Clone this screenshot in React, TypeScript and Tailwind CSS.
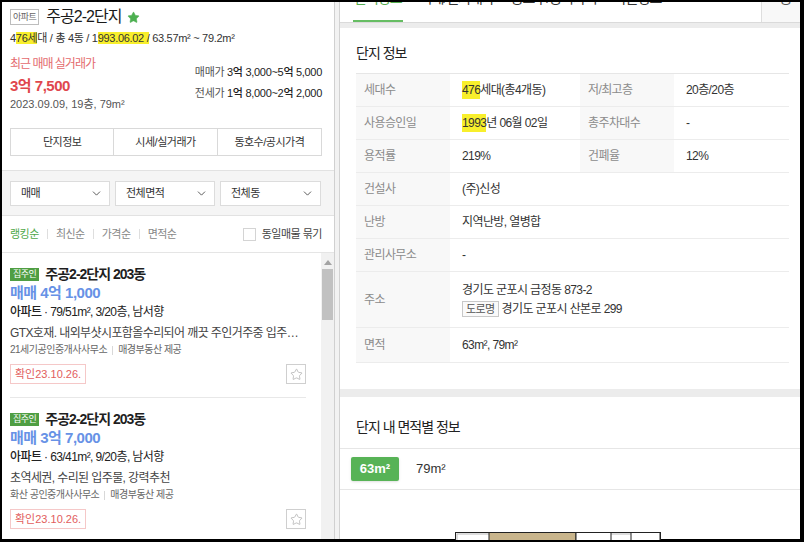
import type { ReactNode } from 'react';
import { ChevronDown, Star } from 'lucide-react';

const HL = ({ children }: { children: ReactNode }) => <span className="bg-[#f8ef2c]">{children}</span>;

const infoRows: { k: string; v: ReactNode; k2?: string; v2?: string }[] = [
  { k: '세대수', v: <><HL>476</HL>세대(총4개동)</>, k2: '저/최고층', v2: '20층/20층' },
  { k: '사용승인일', v: <><HL>1993</HL>년 06월 02일</>, k2: '총주차대수', v2: '-' },
  { k: '용적률', v: '219%', k2: '건폐율', v2: '12%' },
  { k: '건설사', v: '(주)신성' },
  { k: '난방', v: '지역난방, 열병합' },
  { k: '관리사무소', v: '-' },
];

const listings = [
  {
    title: '주공2-2단지 203동',
    price: '매매 4억 1,000',
    spec: '79/51m², 3/20층, 남서향',
    desc: 'GTX호재. 내외부샷시포함올수리되어 깨끗 주인거주중 입주협의 가능합니다',
    agent: '21세기공인중개사사무소',
    date: '23.10.26.',
  },
  {
    title: '주공2-2단지 203동',
    price: '매매 3억 7,000',
    spec: '63/41m², 9/20층, 남서향',
    desc: '초역세권, 수리된 입주물, 강력추천',
    agent: '화산 공인중개사사무소',
    date: '23.10.26.',
  },
];

function Select({ label, w }: { label: string; w: string }) {
  return (
    <div className={`${w} h-[25px] bg-white border border-[#dcdcdc] flex items-center justify-between pl-[10px] pr-[6px] text-[11px] text-[#333] tracking-[-0.5px]`}>
      <span>{label}</span>
      <ChevronDown className="w-[13px] h-[13px] text-[#444]" strokeWidth={1.6} />
    </div>
  );
}

function ListingCard({ item }: { item: (typeof listings)[number] }) {
  return (
    <div className="pt-[13px] pb-[13px] border-b border-[#e8e8e8]">
      <div className="flex items-center h-[16px]">
        <span className="h-[13px] px-[3px] bg-[#4f9e43] text-white text-[9px] leading-[13px] tracking-[-0.5px]">집주인</span>
        <span className="ml-[6px] text-[14px] leading-[16px] font-semibold text-[#1f1f1f] tracking-[-1px]">{item.title}</span>
      </div>
      <div className="mt-[1px] h-[20px] leading-[20px] text-[15px] font-bold text-[#6792e6] tracking-[-0.5px]">{item.price}</div>
      <div className="mt-[1px] h-[16px] leading-[16px] text-[12px] text-[#222] tracking-[-0.6px]">
        <span className="font-medium">아파트</span> · {item.spec}
      </div>
      <div className="mt-[5px] h-[16px] leading-[16px] text-[12px] text-[#444] tracking-[-0.6px] truncate">{item.desc}</div>
      <div className="mt-[2px] h-[14px] leading-[14px] text-[10px] text-[#666] tracking-[-0.5px] flex items-center">
        <span>{item.agent}</span>
        <span className="mx-[5px] w-px h-[9px] bg-[#d8d8d8]" />
        <span>매경부동산 제공</span>
      </div>
      <div className="mt-[7px] flex items-center justify-between h-[20px]">
        <span className="h-[20px] px-[4px] border border-[#f5c8c8] text-[11px] leading-[18px] text-[#e25d5d]">
          확인{item.date}
        </span>
        <span className="w-[20px] h-[20px] border border-[#cfcfcf] flex items-center justify-center">
          <Star className="w-[13px] h-[13px] text-[#aaa]" strokeWidth={1.3} />
        </span>
      </div>
    </div>
  );
}

export default function App() {
  return (
    <div className="w-[804px] h-[542px] bg-black pt-[2px] pl-[2px] pr-[4px] pb-[3px] overflow-hidden font-['Liberation_Sans','Noto_Sans_CJK_KR',sans-serif]">
      <div className="flex h-full bg-white">
        {/* left panel */}
        <div className="w-[333px] shrink-0 h-full flex flex-col border-r border-[#d0d0d0]">
          <div className="pl-[8px] pr-[12px]">
            <div className="flex items-center h-[18px] mt-[6px]">
              <span className="h-[16px] px-[2px] border border-[#bdbdbd] text-[9px] leading-[14px] text-[#666] tracking-[-0.5px]">아파트</span>
              <span className="ml-[7px] text-[16px] leading-[18px] text-[#1a1a1a] tracking-[-1px]">주공2-2단지</span>
              <Star className="ml-[6px] w-[13px] h-[13px] text-[#4caf50] fill-[#4caf50]" strokeWidth={1} />
            </div>
            <div className="mt-[5px] h-[14px] leading-[14px] text-[11px] text-[#333] tracking-[-0.3px]">
              4<HL>76세</HL>대 / 총 4동 / 1<HL>993.06.02 /</HL> 63.57m² ~ 79.2m²
            </div>
            <div className="flex justify-between">
              <div>
                <div className="mt-[12px] h-[14px] leading-[14px] text-[12px] text-[#e46a6e] tracking-[-1px]">최근 매매 실거래가</div>
                <div className="mt-[5px] h-[20px] leading-[20px] text-[15px] font-bold text-[#e0474d] tracking-[-0.5px]">3억 7,500</div>
                <div className="mt-[1px] h-[14px] leading-[14px] text-[11px] text-[#555]">2023.09.09, 19층, 79m²</div>
              </div>
              <div className="pt-[20px] flex flex-col gap-[7px] text-[11px] tracking-[-0.3px]">
                <div className="h-[14px] leading-[14px]">
                  <span className="text-[#555]">매매가 </span>
                  <span className="text-[#222] font-medium">3억 3,000~5억 5,000</span>
                </div>
                <div className="h-[14px] leading-[14px]">
                  <span className="text-[#555]">전세가 </span>
                  <span className="text-[#222] font-medium">1억 8,000~2억 2,000</span>
                </div>
              </div>
            </div>
            <div className="mt-[17px] h-[28px] grid grid-cols-3 border border-[#d9d9d9] text-[11px] text-[#333] tracking-[-0.5px]">
              <div className="flex items-center justify-center border-r border-[#d9d9d9]">단지정보</div>
              <div className="flex items-center justify-center border-r border-[#d9d9d9]">시세/실거래가</div>
              <div className="flex items-center justify-center">동호수/공시가격</div>
            </div>
          </div>

          <div className="mt-[14px] bg-[#f5f5f5] border-y border-[#e2e2e2] pt-[10px] pb-[9px] pl-[8px] pr-[12px] flex gap-[5px]">
            <Select label="매매" w="w-[100px]" />
            <Select label="전체면적" w="w-[100px]" />
            <Select label="전체동" w="w-[101px]" />
          </div>

          <div className="h-[37px] shrink-0 border-b border-[#e5e5e5] pl-[8px] pr-[12px] flex items-center text-[11px] tracking-[-0.5px]">
            <span className="text-[#4fa84a]">랭킹순</span>
            <span className="mx-[8px] w-px h-[10px] bg-[#dedede]" />
            <span className="text-[#888]">최신순</span>
            <span className="mx-[8px] w-px h-[10px] bg-[#dedede]" />
            <span className="text-[#888]">가격순</span>
            <span className="mx-[8px] w-px h-[10px] bg-[#dedede]" />
            <span className="text-[#888]">면적순</span>
            <span className="ml-auto w-[13px] h-[13px] border border-[#d4d4d4] bg-white" />
            <span className="ml-[6px] text-[#444]">동일매물 묶기</span>
          </div>

          <div className="flex-1 min-h-0 flex overflow-hidden">
            <div className="flex-1 min-w-0 pl-[8px] pr-[15px]">
              {listings.map((l, i) => (
                <ListingCard key={i} item={l} />
              ))}
            </div>
            <div className="w-[13px] shrink-0 bg-[#f1f1f1] flex flex-col items-center pt-[7px]">
              <svg width="8" height="5" viewBox="0 0 8 5">
                <path d="M0 5 L4 0 L8 5 Z" fill="#a3a3a3" />
              </svg>
              <div className="mt-[4px] w-[11px] h-[51px] bg-[#c1c1c1]" />
            </div>
          </div>
        </div>

        {/* divider strip */}
        <div className="w-[5px] shrink-0 bg-[#f2f2f2] border-r border-[#d2d2d2]" />

        {/* right panel */}
        <div className="flex-1 min-w-0 h-full flex flex-col">
          <div className="h-[20px] shrink-0 flex overflow-hidden text-[14px] tracking-[-1px]">
            <div className="flex gap-[17px] pl-[13px]">
              <div className="h-full border-b-2 border-[#66bd63] px-[1px]">
                <div className="-mt-[14px] leading-[20px] text-[#55ad4f]">단지정보</div>
              </div>
              <div className="h-full">
                <div className="-mt-[14px] leading-[20px] text-[#333]">시세/실거래가</div>
              </div>
              <div className="h-full">
                <div className="-mt-[14px] leading-[20px] text-[#333]">동호수/공시가격</div>
              </div>
              <div className="h-full">
                <div className="-mt-[14px] leading-[20px] text-[#333]">학군정보</div>
              </div>
            </div>
            <div className="ml-auto w-[39px] h-full border-l border-[#dedede] bg-[#f8f8f8] pl-[10px]">
              <div className="-mt-[14px] leading-[20px] text-[#555]">○공</div>
            </div>
          </div>
          <div className="h-[6px] shrink-0 bg-[#ececec] border-t border-[#dadada]" />

          <div className="shrink-0 pl-[16px] pr-[11px] pt-[15px] pb-[26px]">
            <div className="h-[20px] leading-[20px] text-[14px] text-[#222] tracking-[-1px]">단지 정보</div>
            <div className="mt-[10px] border-t border-[#e6e6e6] text-[12px] tracking-[-0.6px]">
              {infoRows.map((r) => (
                <div key={r.k} className="h-[33px] flex border-b border-[#ececec]">
                  <div className="w-[94px] shrink-0 bg-[#f8f8f8] pl-[8px] flex items-center text-[#8c8c8c]">{r.k}</div>
                  {r.k2 ? (
                    <>
                      <div className="w-[130px] shrink-0 pl-[12px] flex items-center text-[#333]">{r.v}</div>
                      <div className="w-[94px] shrink-0 bg-[#f8f8f8] pl-[8px] flex items-center text-[#8c8c8c]">{r.k2}</div>
                      <div className="flex-1 pl-[12px] flex items-center text-[#333]">{r.v2}</div>
                    </>
                  ) : (
                    <div className="flex-1 pl-[12px] flex items-center text-[#333]">{r.v}</div>
                  )}
                </div>
              ))}
              <div className="h-[56px] flex border-b border-[#ececec]">
                <div className="w-[94px] shrink-0 bg-[#f8f8f8] pl-[8px] flex items-center text-[#8c8c8c]">주소</div>
                <div className="flex-1 pl-[12px] flex flex-col justify-center gap-[3px] text-[#333]">
                  <div className="leading-[16px]">경기도 군포시 금정동 873-2</div>
                  <div className="flex items-center leading-[16px]">
                    <span className="h-[16px] px-[3px] border border-[#c8c8c8] bg-[#fafafa] text-[11px] leading-[14px] text-[#555]">도로명</span>
                    <span className="ml-[3px]">경기도 군포시 산본로 299</span>
                  </div>
                </div>
              </div>
              <div className="h-[35px] flex border-b border-[#ececec]">
                <div className="w-[94px] shrink-0 bg-[#f8f8f8] pl-[8px] flex items-center text-[#8c8c8c]">면적</div>
                <div className="flex-1 pl-[12px] flex items-center text-[#333]">63m², 79m²</div>
              </div>
            </div>
          </div>

          <div className="h-[8px] shrink-0 bg-[#ececec]" />

          <div className="flex-1 min-h-0 flex flex-col">
            <div className="pt-[20px] pb-[11px] pl-[16px] border-b border-[#e6e6e6]">
              <div className="h-[20px] leading-[20px] text-[14px] text-[#222] tracking-[-1px]">단지 내 면적별 정보</div>
            </div>
            <div className="py-[8px] pl-[11px] flex items-center border-b border-[#e6e6e6]">
              <span className="w-[48px] h-[24px] rounded-[2px] bg-[#57b356] text-white text-[13px] font-bold flex items-center justify-center shadow-sm">
                63m²
              </span>
              <span className="ml-[17px] text-[13px] text-[#333]">79m²</span>
            </div>
            <div className="mt-[42px] pl-[115px]">
              <svg width="206" height="8" viewBox="0 0 206 8">
                <rect x="0.5" y="0.5" width="205" height="10" fill="#fff" stroke="#222" />
                <rect x="2" y="2" width="202" height="8" fill="none" stroke="#bbb" />
                <rect x="34" y="0.5" width="87" height="10" fill="#c9b58c" stroke="#222" />
                <rect x="121" y="0.5" width="35" height="10" fill="#fff" stroke="#222" />
                <rect x="176" y="0.5" width="29" height="10" fill="#fff" stroke="#222" />
              </svg>
            </div>
          </div>
        </div>
      </div>
    </div>
  );
}
